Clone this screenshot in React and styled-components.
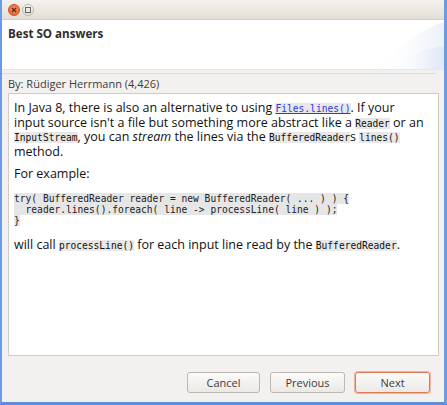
import styled, { createGlobalStyle } from "styled-components";

const Global = createGlobalStyle`
  html, body { margin: 0; padding: 0; }
  body { background: #6f9de0; }
`;

const Window = styled.div`
  width: 447px;
  height: 405px;
  box-sizing: border-box;
  border-left: 2px solid #6c9be0;
  border-right: 3px solid #6c9be0;
  border-bottom: 3px solid #5d8fd8;
  background: #f2f1f0;
  display: flex;
  flex-direction: column;
  font-family: "Open Sans", "DejaVu Sans", sans-serif;
  overflow: hidden;
`;

const TitleBar = styled.div`
  height: 20px;
  flex: none;
  box-sizing: border-box;
  background: linear-gradient(#f4f2ef, #e3ded6);
  border-bottom: 1px solid #d3cdc4;
  display: flex;
  align-items: center;
  gap: 2px;
  padding-left: 6px;
`;

const WinButton = styled.div`
  width: 12px;
  height: 12px;
  border-radius: 50%;
  display: flex;
  align-items: center;
  justify-content: center;
  box-sizing: border-box;
  background: ${(p) =>
    p.$close
      ? "radial-gradient(circle at 50% 40%, #f79468, #e2562a)"
      : "linear-gradient(#f7f6f4, #e4e0da)"};
  border: 1px solid ${(p) => (p.$close ? "#c9522c" : "#bdb7ae")};
`;

const Header = styled.div`
  position: relative;
  height: 50px;
  flex: none;
  box-sizing: border-box;
  background: #fff;
  border-bottom: 1px solid #e9e7e4;
  padding: 6px 6px;
  overflow: hidden;
`;

const Title = styled.div`
  font-weight: bold;
  font-size: 11.6px;
  color: #2e2e2e;
`;

const Swoosh = styled.svg`
  position: absolute;
  right: 0;
  top: 0;
`;

const Sep = styled.div`
  height: 1px;
  margin: 3px 8px 0 0;
  background: #e0ddd8;
`;

const Byline = styled.div`
  font-size: 11px;
  color: #3c3c3c;
  padding: 3px 6px 0;
  line-height: 14px;
`;

const Content = styled.div`
  margin: 2px 5px 0 6px;
  height: 263px;
  box-sizing: border-box;
  background: #fff;
  border: 1px solid #cfcdc9;
  padding: 7px 5px;
  font-size: 12.5px;
  line-height: 14.5px;
  color: #111;
  white-space: nowrap;
`;

const Para = styled.p`
  margin: 0 0 ${(p) => p.$gap || 0}px;
`;

const Code = styled.code`
  font-family: "DejaVu Sans Mono", monospace;
  font-size: 9.6px;
  line-height: 1;
  background: #e8e8e8;
  color: inherit;
  padding: 0;
`;

const Link = styled.a`
  color: #2a3ae0;
  text-decoration: underline;
`;

const Pre = styled.pre`
  margin: 0 0 12px;
  font-family: "DejaVu Sans Mono", monospace;
  font-size: 9.6px;
  line-height: 11px;
  color: #222;
  span {
    background: #e6e6e6;
  }
`;

const Footer = styled.div`
  flex: 1;
  display: flex;
  justify-content: flex-end;
  align-items: flex-start;
  padding: 16px 14px 0 0;
  gap: 10px;
`;

const Button = styled.button`
  width: ${(p) => p.$w}px;
  height: 21px;
  box-sizing: border-box;
  border-radius: 3px;
  border: 1px solid ${(p) => (p.$default ? "#e07b55" : "#bcb8b1")};
  box-shadow: ${(p) => (p.$default ? "0 0 0 1px #f0b49c" : "none")};
  background: linear-gradient(#fbfbfa, #ebe9e6);
  font-family: "Open Sans", "DejaVu Sans", sans-serif;
  font-size: 11px;
  color: #3c3c3c;
  padding: 0;
`;

export default function App() {
  return (
    <>
      <Global />
      <Window>
        <TitleBar>
          <WinButton $close>
            <svg width="6" height="6" viewBox="0 0 6 6">
              <path d="M1 1L5 5M5 1L1 5" stroke="#5a2412" strokeWidth="1.1" />
            </svg>
          </WinButton>
          <WinButton>
            <svg width="6" height="6" viewBox="0 0 6 6">
              <rect x="0.5" y="0.5" width="5" height="5" fill="none" stroke="#6a655e" />
            </svg>
          </WinButton>
        </TitleBar>
        <Header>
          <Title>Best SO answers</Title>
          <Swoosh width="70" height="50" viewBox="0 0 70 50">
            <defs>
              <linearGradient id="g1" x1="0" y1="0" x2="1" y2="0">
                <stop offset="0" stopColor="#ffffff" stopOpacity="0" />
                <stop offset="1" stopColor="#dfe8f7" />
              </linearGradient>
            </defs>
            <path d="M0 50 C20 30 45 10 70 2 L70 50 Z" fill="url(#g1)" opacity="0.6" />
            <path d="M18 50 C35 35 52 28 70 26 L70 50 Z" fill="url(#g1)" />
          </Swoosh>
        </Header>
        <Sep />
        <Byline>By: Rüdiger Herrmann (4,426)</Byline>
        <Content>
          <Para $gap={8}>
            In Java 8, there is also an alternative to using{" "}
            <Link href="#">
              <Code>Files.lines()</Code>
            </Link>
            . If your
            <br />
            input source isn't a file but something more abstract like a{" "}
            <Code>Reader</Code> or an
            <br />
            <Code>InputStream</Code>, you can <em>stream</em> the lines via the{" "}
            <Code>BufferedReader</Code>s <Code>lines()</Code>
            <br />
            method.
          </Para>
          <Para $gap={11}>For example:</Para>
          <Pre>
            <span>try( BufferedReader reader = new BufferedReader( ... ) ) {"{"}</span>
            {"\n"}
            <span>  reader.lines().foreach( line -&gt; processLine( line ) );</span>
            {"\n"}
            <span>{"}"}</span>
          </Pre>
          <Para>
            will call <Code>processLine()</Code> for each input line read by the{" "}
            <Code>BufferedReader</Code>.
          </Para>
        </Content>
        <Footer>
          <Button $w={73}>Cancel</Button>
          <Button $w={75}>Previous</Button>
          <Button $w={75} $default>
            Next
          </Button>
        </Footer>
      </Window>
    </>
  );
}
